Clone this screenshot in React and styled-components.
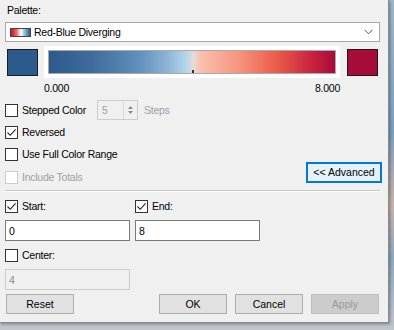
import React from "react";
import styled, { createGlobalStyle } from "styled-components";

const GlobalStyle = createGlobalStyle`
  html, body {
    margin: 0;
    padding: 0;
  }
  body {
    width: 394px;
    height: 330px;
    overflow: hidden;
    background: linear-gradient(180deg, #9fb6cc 0%, #7d9fc0 40%, #c9b3ab 62%, #8ea9c4 78%, #bfc6cc 100%);
    font-family: "Liberation Sans", Arial, sans-serif;
  }
`;

const Dialog = styled.div`
  width: 389px;
  height: 323px;
  padding: 0 6px 0 5px;
  box-sizing: border-box;
  background: #f0f0f0;
  border-right: 1px solid #8a8a8a;
  border-bottom: 1px solid #8a8a8a;
  box-shadow: 1px 1px 3px rgba(0, 0, 0, 0.35);
  font-size: 10.5px;
  letter-spacing: -0.25px;
  color: #000;
  display: flex;
  flex-direction: column;
`;

const Label = styled.div`
  height: 15px;
  line-height: 15px;
  margin-top: 3px;
  padding-left: 2px;
`;

const Select = styled.div`
  margin-top: 4px;
  height: 20px;
  width: 375px;
  box-sizing: border-box;
  background: #fff;
  border: 1px solid #a8a8a8;
  display: flex;
  align-items: center;
  padding: 0 6px 0 4px;
  gap: 3px;
`;

const PaletteIcon = styled.div`
  width: 21px;
  height: 9px;
  box-sizing: border-box;
  border: 1px solid #444;
  background: linear-gradient(90deg, #c0102f 0%, #f06b6b 30%, #ffffff 52%, #9cc3e2 70%, #2c5a8c 100%);
`;

const SelectText = styled.span`
  flex: 1;
`;

const GradientRow = styled.div`
  margin-top: 4px;
  height: 32px;
  display: flex;
  align-items: center;
`;

const Swatch = styled.div`
  width: 31px;
  height: 27px;
  box-sizing: border-box;
  border: 1px solid #1b1b1b;
  background: ${(p) => p.$color};
  margin-left: ${(p) => p.$ml || 0}px;
`;

const RampPanel = styled.div`
  margin-left: 6px;
  width: 296px;
  height: 32px;
  background: #fff;
  padding: 4px;
  box-sizing: border-box;
`;

const Ramp = styled.div`
  position: relative;
  height: 100%;
  box-sizing: border-box;
  border: 1px solid #a9a9a9;
  background: linear-gradient(
    90deg,
    #2c5a8c 0%,
    #3f6c9c 15%,
    #6291bd 32%,
    #8fb8d8 42%,
    #b4d6ea 48%,
    #e6dcd8 50.5%,
    #fbbfae 53%,
    #f7957f 66%,
    #ea5a48 80%,
    #c9223e 92%,
    #a70c39 100%
  );
`;

const Tick = styled.div`
  position: absolute;
  left: 50%;
  bottom: 0;
  width: 2px;
  height: 3px;
  background: #333;
`;

const ValueRow = styled.div`
  height: 15px;
  line-height: 15px;
  margin-top: 3px;
  width: 335px;
  padding-left: 39px;
  box-sizing: border-box;
  display: flex;
  justify-content: space-between;
`;

const OptionRow = styled.div`
  height: 22px;
  display: flex;
  align-items: center;
  margin-top: ${(p) => p.$mt || 0}px;
  color: ${(p) => (p.$disabled ? "#a0a0a0" : "#000")};
`;

const OptionText = styled.span`
  width: ${(p) => (p.$width ? `${p.$width}px` : "auto")};
`;

const CheckBox = styled.span`
  width: 13px;
  height: 13px;
  box-sizing: border-box;
  border: 1px solid ${(p) => (p.$disabled ? "#cccccc" : "#333")};
  background: #fff;
  display: inline-flex;
  align-items: center;
  justify-content: center;
  margin-right: 4px;
  flex: none;
`;

const Spinner = styled.div`
  width: 41px;
  height: 20px;
  box-sizing: border-box;
  border: 1px solid #cccccc;
  background: #f0f0f0;
  color: #a0a0a0;
  display: flex;
  align-items: center;
  padding-left: 4px;
`;

const SpinValue = styled.span`
  flex: 1;
`;

const SpinArrows = styled.div`
  width: 13px;
  height: 100%;
  border-left: 1px solid #d8d8d8;
  display: flex;
  flex-direction: column;
  align-items: center;
  justify-content: center;
  gap: 2px;
`;

const Steps = styled.span`
  margin-left: 6px;
  color: #a0a0a0;
`;

const AdvancedButton = styled.button`
  margin-left: auto;
  margin-top: -10px;
  width: 76px;
  height: 21px;
  box-sizing: border-box;
  background: #e5f1fb;
  border: 2px solid #0078d7;
  font: inherit;
  color: #000;
  padding: 0;
`;

const Separator = styled.div`
  margin-top: 2px;
  width: 375px;
  height: 1px;
  background: #c8c8c8;
  border-bottom: 1px solid #fff;
`;

const FieldGrid = styled.div`
  display: grid;
  grid-template-columns: 125px 125px;
  column-gap: 5px;
  margin-top: 7px;
`;

const CheckLabel = styled.div`
  height: 14px;
  display: flex;
  align-items: center;
`;

const TextInput = styled.div`
  margin-top: 7px;
  height: 21px;
  box-sizing: border-box;
  border: 1px solid ${(p) => (p.$disabled ? "#cccccc" : "#7a7a7a")};
  background: ${(p) => (p.$disabled ? "#f0f0f0" : "#fff")};
  color: ${(p) => (p.$disabled ? "#8a8a8a" : "#000")};
  padding-left: 3px;
  display: flex;
  align-items: center;
`;

const CenterBlock = styled.div`
  margin-top: 7px;
  width: 125px;
`;

const ButtonRow = styled.div`
  margin-top: 4px;
  display: flex;
  width: 374px;
  padding-left: 1px;
`;

const DialogButton = styled.button`
  width: 68px;
  height: 20px;
  box-sizing: border-box;
  font: inherit;
  padding: 0;
  background: ${(p) => (p.$disabled ? "#cccccc" : "#e1e1e1")};
  border: 1px solid ${(p) => (p.$disabled ? "#bfbfbf" : "#adadad")};
  color: ${(p) => (p.$disabled ? "#9a9a9a" : "#000")};
  margin-left: ${(p) => p.$ml || 0}px;
`;

function Check({ checked, disabled }) {
  return (
    <CheckBox $disabled={disabled}>
      {checked && (
        <svg width="11" height="11" viewBox="0 0 11 11">
          <path d="M1.5 5.5 L4.2 8.3 L9.6 2.3" fill="none" stroke="#222" strokeWidth="1.1" />
        </svg>
      )}
    </CheckBox>
  );
}

export default function App() {
  return (
    <>
      <GlobalStyle />
      <Dialog>
        <Label>Palette:</Label>
        <Select>
          <PaletteIcon />
          <SelectText>Red-Blue Diverging</SelectText>
          <svg width="9" height="6" viewBox="0 0 9 6">
            <path d="M0.5 0.8 L4.5 4.8 L8.5 0.8" fill="none" stroke="#555" strokeWidth="1" />
          </svg>
        </Select>
        <GradientRow>
          <Swatch $color="#2c5a8c" $ml={2} />
          <RampPanel>
            <Ramp>
              <Tick />
            </Ramp>
          </RampPanel>
          <Swatch $color="#a70c39" $ml={7} />
        </GradientRow>
        <ValueRow>
          <span>0.000</span>
          <span>8.000</span>
        </ValueRow>
        <OptionRow $mt={3}>
          <Check />
          <OptionText $width={75}>Stepped Color</OptionText>
          <Spinner>
            <SpinValue>5</SpinValue>
            <SpinArrows>
              <svg width="5" height="3" viewBox="0 0 5 3">
                <path d="M0 3 L2.5 0 L5 3 Z" fill="#888" />
              </svg>
              <svg width="5" height="3" viewBox="0 0 5 3">
                <path d="M0 0 L2.5 3 L5 0 Z" fill="#888" />
              </svg>
            </SpinArrows>
          </Spinner>
          <Steps>Steps</Steps>
        </OptionRow>
        <OptionRow>
          <Check checked />
          <OptionText>Reversed</OptionText>
        </OptionRow>
        <OptionRow>
          <Check />
          <OptionText>Use Full Color Range</OptionText>
        </OptionRow>
        <OptionRow $disabled $mt={1}>
          <Check disabled />
          <OptionText>Include Totals</OptionText>
          <AdvancedButton>&lt;&lt; Advanced</AdvancedButton>
        </OptionRow>
        <Separator />
        <FieldGrid>
          <CheckLabel>
            <Check checked />
            Start:
          </CheckLabel>
          <CheckLabel>
            <Check checked />
            End:
          </CheckLabel>
          <TextInput>0</TextInput>
          <TextInput>8</TextInput>
        </FieldGrid>
        <CenterBlock>
          <CheckLabel>
            <Check />
            Center:
          </CheckLabel>
          <TextInput $disabled>4</TextInput>
        </CenterBlock>
        <ButtonRow>
          <DialogButton>Reset</DialogButton>
          <DialogButton $ml={85}>OK</DialogButton>
          <DialogButton $ml={8}>Cancel</DialogButton>
          <DialogButton $ml={8} $disabled>
            Apply
          </DialogButton>
        </ButtonRow>
      </Dialog>
    </>
  );
}
